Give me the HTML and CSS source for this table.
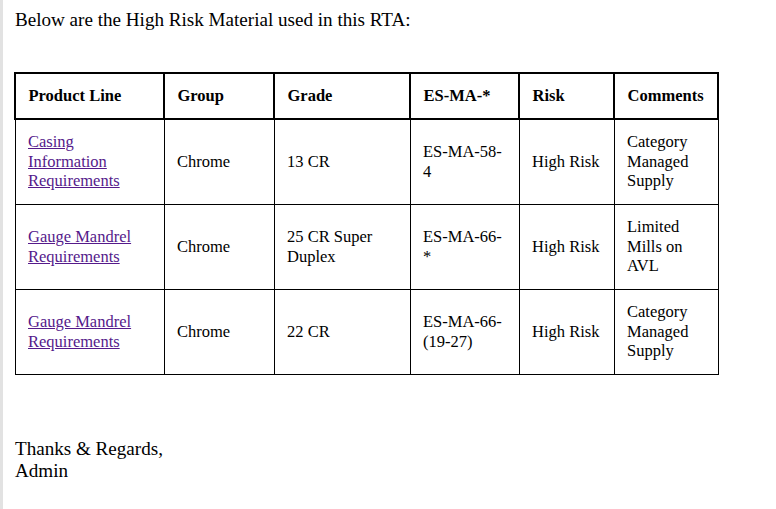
FILE: index.html
```html
<!DOCTYPE html>
<html>
<head>
<meta charset="utf-8">
<link rel="stylesheet" href="styles.css">
</head>
<body>
<div class="page">
  <p class="intro">Below are the High Risk Material used in this RTA:</p>
  <table class="risk">
    <colgroup>
      <col class="c1"><col class="c2"><col class="c3"><col class="c4"><col class="c5"><col class="c6">
    </colgroup>
    <thead>
      <tr>
        <th>Product Line</th>
        <th>Group</th>
        <th>Grade</th>
        <th>ES-MA-*</th>
        <th>Risk</th>
        <th>Comments</th>
      </tr>
    </thead>
    <tbody>
      <tr>
        <td><a href="#">Casing Information Requirements</a></td>
        <td>Chrome</td>
        <td>13 CR</td>
        <td>ES-MA-58-4</td>
        <td>High Risk</td>
        <td>Category Managed Supply</td>
      </tr>
      <tr>
        <td><a href="#">Gauge Mandrel Requirements</a></td>
        <td>Chrome</td>
        <td>25 CR Super Duplex</td>
        <td>ES-MA-66-*</td>
        <td>High Risk</td>
        <td>Limited Mills on AVL</td>
      </tr>
      <tr>
        <td><a href="#">Gauge Mandrel Requirements</a></td>
        <td>Chrome</td>
        <td>22 CR</td>
        <td>ES-MA-66-(19-27)</td>
        <td>High Risk</td>
        <td>Category Managed Supply</td>
      </tr>
    </tbody>
  </table>
  <p class="sign">Thanks &amp; Regards,<br>Admin</p>
</div>
</body>
</html>
```

FILE: styles.css
```css
html, body {
  margin: 0;
  padding: 0;
  background: #ffffff;
}
body {
  font-family: "Liberation Serif", "Times New Roman", serif;
  color: #000000;
}
.page {
  min-height: 509px;
  box-sizing: border-box;
  border-left: 3px solid #e2e2e2;
  padding: 9px 0 0 11px;
}
.intro {
  margin: 0 0 0 1px;
  font-size: 19.1px;
  line-height: 21.6px;
}
.risk {
  margin-top: 41px;
  border-collapse: collapse;
  table-layout: fixed;
  width: 703px;
  font-size: 16.5px;
  line-height: 19.5px;
}
.c1 { width: 149px; }
.c2 { width: 110px; }
.c3 { width: 136px; }
.c4 { width: 109px; }
.c5 { width: 95px; }
.c6 { width: 104px; }
.risk th {
  border: 2px solid #000000;
  padding: 12px 12px 12.5px 12.5px;
  text-align: left;
  font-weight: bold;
}
.risk td {
  border: 1px solid #000000;
  padding: 12.75px 12px 12.75px 12.5px;
  text-align: left;
  vertical-align: middle;
}
.risk a {
  color: #551a8b;
  text-decoration: underline;
}
.sign {
  margin: 63px 0 0 1px;
  font-size: 19.1px;
  line-height: 22px;
}
```
